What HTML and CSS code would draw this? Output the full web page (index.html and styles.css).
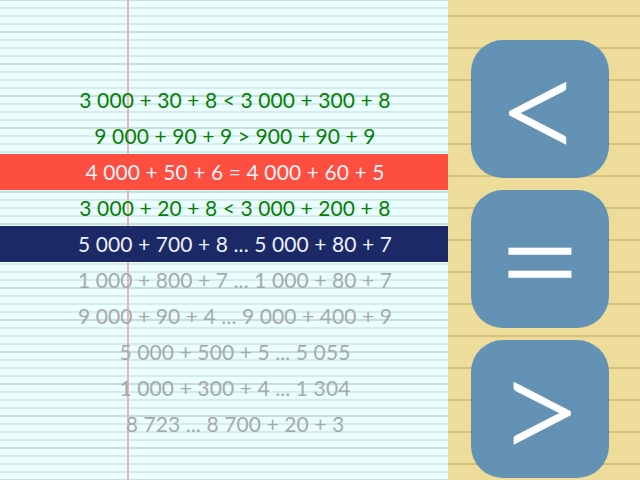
FILE: index.html
```html
<!DOCTYPE html>
<html>
<head>
<meta charset="utf-8">
<link rel="stylesheet" href="styles.css">
</head>
<body>
<div class="app">
  <div class="sheet">
    <div class="list">
      <div class="row done">3 000 + 30 + 8 &lt; 3 000 + 300 + 8</div>
      <div class="row done">9 000 + 90 + 9 &gt; 900 + 90 + 9</div>
      <div class="row wrong">4 000 + 50 + 6 = 4 000 + 60 + 5</div>
      <div class="row done">3 000 + 20 + 8 &lt; 3 000 + 200 + 8</div>
      <div class="row current">5 000 + 700 + 8 ... 5 000 + 80 + 7</div>
      <div class="row todo">1 000 + 800 + 7 ... 1 000 + 80 + 7</div>
      <div class="row todo">9 000 + 90 + 4 ... 9 000 + 400 + 9</div>
      <div class="row todo">5 000 + 500 + 5 ... 5 055</div>
      <div class="row todo">1 000 + 300 + 4 ... 1 304</div>
      <div class="row todo">8 723 ... 8 700 + 20 + 3</div>
    </div>
  </div>
  <div class="pad">
    <button class="key">&lt;</button>
    <button class="key eq">=</button>
    <button class="key">&gt;</button>
  </div>
</div>
</body>
</html>
```
FILE: styles.css
```css
html, body {
  margin: 0;
  padding: 0;
}
body {
  width: 640px;
  height: 480px;
  overflow: hidden;
  font-family: "Lato", "DejaVu Sans", sans-serif;
}
.app {
  display: flex;
  width: 640px;
  height: 480px;
}
.sheet {
  width: 448px;
  height: 480px;
  background-color: #ebffff;
  background-image:
    linear-gradient(to right, transparent 127px, #f1b3b3 127px, #f1b3b3 129px, transparent 129px),
    repeating-linear-gradient(to bottom, transparent 0, transparent 30px, #c9dcdc 30px, #c9dcdc 32px),
    repeating-linear-gradient(to bottom, transparent 0, transparent 6px, #d5ecee 6px, #d5ecee 8px);
  background-size: 100% 100%, 100% 32px, 100% 8px;
  background-position: 0 0, 0 1px, 0 1px;
  padding-top: 82px;
  box-sizing: border-box;
}
.list {
  display: flex;
  flex-direction: column;
}
.row {
  height: 36px;
  line-height: 36px;
  padding-left: 22px;
  text-align: center;
  font-size: 21px;
  font-weight: 400;
  letter-spacing: 0.1px;
  white-space: nowrap;
}
.done { color: #038003; }
.wrong { background: #fd4f40; color: #f4f2fa; }
.current { background: #1b2a66; color: #eef0fa; }
.todo { color: #a3abab; }
.pad {
  width: 192px;
  height: 480px;
  background-color: #eedc9a;
  background-image: repeating-linear-gradient(to bottom, transparent 0, transparent 15px, #d6c27f 15px, #d6c27f 17px, transparent 17px, transparent 32px);
  display: flex;
  flex-direction: column;
  gap: 12px;
  padding: 40px 0 0 23px;
  box-sizing: border-box;
}
.key {
  width: 138px;
  height: 138px;
  border: none;
  border-radius: 32px;
  background: rgba(84, 137, 184, 0.9);
  color: #ffffff;
  -webkit-text-stroke: 1.6px #ffffff;
  font-family: "Lato", "DejaVu Sans", sans-serif;
  font-weight: 300;
  font-size: 148px;
  line-height: 1;
  padding: 0 0 6px 0;
  display: flex;
  align-items: center;
  justify-content: center;
}
```
